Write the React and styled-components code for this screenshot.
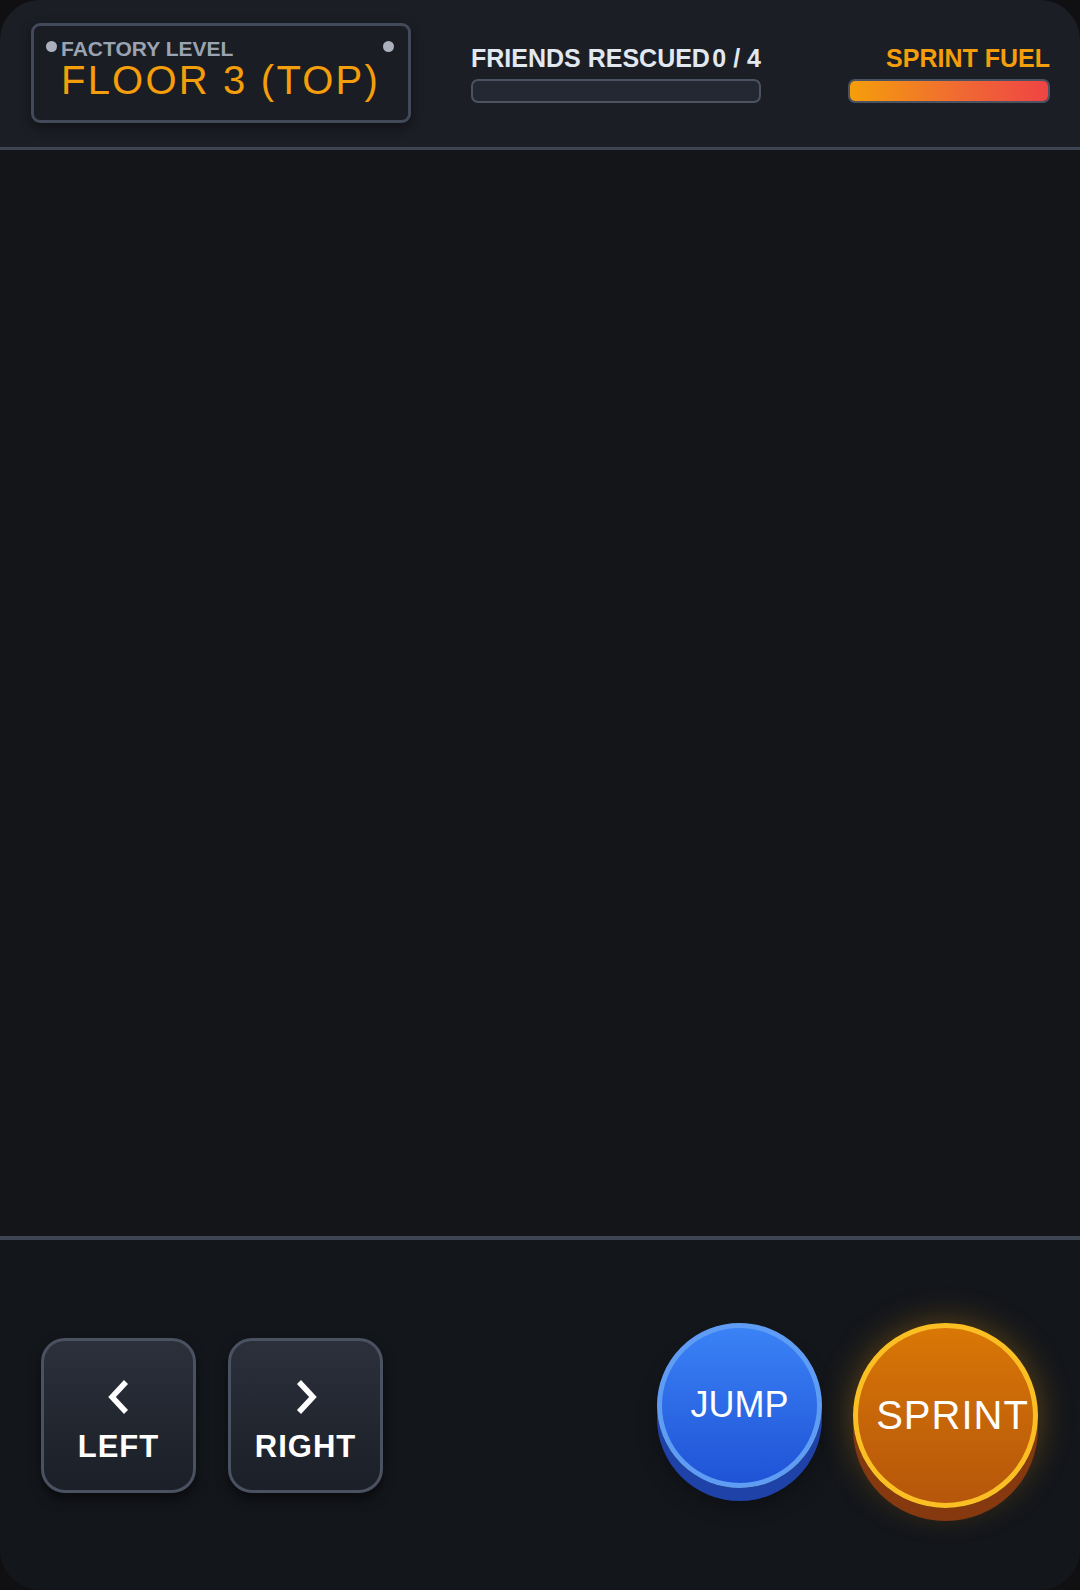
import React from 'react';
import styled, { createGlobalStyle } from 'styled-components';

const GlobalStyle = createGlobalStyle`
  * { box-sizing: border-box; }
  body {
    margin: 0;
    background: #100f11;
    font-family: "Liberation Sans", Arial, sans-serif;
  }
`;

const Shell = styled.div`
  height: 100vh;
  min-height: 1590px;
  display: flex;
  flex-direction: column;
  border-radius: 40px;
  overflow: hidden;
  background: #131519;
`;

const Header = styled.header`
  height: 150px;
  flex-shrink: 0;
  display: flex;
  align-items: center;
  padding: 0 30px 0 31px;
  background: #1b1e25;
  border-bottom: 3px solid #3d4452;
`;

const Plate = styled.div`
  position: relative;
  width: 380px;
  height: 100px;
  padding: 12px 27px 0;
  margin-top: -2px;
  display: flex;
  flex-direction: column;
  gap: 1px;
  background: #1a1d23;
  border: 3px solid #424958;
  border-radius: 9px;
  box-shadow: 0 4px 12px rgba(0, 0, 0, 0.45);
`;

const Screw = styled.span`
  position: absolute;
  top: 15px;
  ${p => (p.$right ? 'right: 14px;' : 'left: 12px;')}
  width: 11px;
  height: 11px;
  border-radius: 50%;
  background: #aab1bd;
`;

const PlateLabel = styled.div`
  font-size: 21px;
  line-height: 21px;
  font-weight: 700;
  color: #9aa3b2;
`;

const PlateValue = styled.div`
  font-size: 40px;
  line-height: 40px;
  letter-spacing: 2.2px;
  color: #f59e0b;
`;

const Meter = styled.div`
  display: flex;
  flex-direction: column;
  gap: 6px;
  width: ${p => p.$width}px;
  margin-left: ${p => p.$offset};
`;

const MeterLabel = styled.div`
  display: flex;
  justify-content: ${p => (p.$end ? 'flex-end' : 'space-between')};
  font-size: 25px;
  line-height: 29px;
  font-weight: 700;
  white-space: nowrap;
  color: ${p => p.$color};
`;

const Track = styled.div`
  height: 24px;
  border: 2px solid #4b5362;
  border-radius: 7px;
  background: #232833;
  overflow: hidden;
`;

const Fill = styled.div`
  height: 100%;
  background: linear-gradient(90deg, #f59e0b 0%, #f06a32 55%, #ef4444 100%);
`;

const GameArea = styled.main`
  flex: 1;
  background: #131519;
`;

const Controls = styled.footer`
  height: 354px;
  flex-shrink: 0;
  display: flex;
  align-items: center;
  justify-content: space-between;
  padding: 0 42px 0 41px;
  background: #13161b;
  border-top: 4px solid #3d4452;
`;

const Group = styled.div`
  display: flex;
  gap: ${p => p.$gap}px;
`;

const PadButton = styled.button`
  width: 155px;
  height: 155px;
  padding: 8px 0 0;
  display: flex;
  flex-direction: column;
  align-items: center;
  justify-content: center;
  gap: 20px;
  border: 3px solid #4a5160;
  border-radius: 24px;
  background: linear-gradient(180deg, #2b303b 0%, #1b1f27 100%);
  box-shadow: 0 6px 12px rgba(0, 0, 0, 0.55);
  color: #ffffff;
  font-family: "Liberation Sans", Arial, sans-serif;
  font-size: 31px;
  line-height: 24px;
  font-weight: 700;
  letter-spacing: 1px;
  cursor: pointer;
`;

const RoundButton = styled.button`
  width: ${p => p.$size}px;
  height: ${p => p.$size}px;
  padding: 0 0 0 ${p => p.$shift}px;
  display: flex;
  align-items: center;
  justify-content: center;
  border-radius: 50%;
  border: 5px solid ${p => p.$ring};
  background: linear-gradient(180deg, ${p => p.$top} 0%, ${p => p.$bottom} 100%);
  box-shadow: 0 13px 0 ${p => p.$base}, ${p => p.$glow};
  color: #ffffff;
  font-family: "Liberation Sans", Arial, sans-serif;
  font-size: ${p => p.$font}px;
  letter-spacing: ${p => p.$spacing}px;
  white-space: nowrap;
  cursor: pointer;
`;

const Chevron = ({ right }) => (
  <svg width="24" height="36" viewBox="0 0 24 36" fill="none">
    <path
      d={right ? 'M5 3 L19 18 L5 33' : 'M19 3 L5 18 L19 33'}
      stroke="#ffffff"
      strokeWidth="5.5"
      strokeLinejoin="miter"
    />
  </svg>
);

export default function App() {
  const rescued = 0;
  const total = 4;
  const fuel = 100;

  return (
    <>
      <GlobalStyle />
      <Shell>
        <Header>
          <Plate>
            <Screw />
            <Screw $right />
            <PlateLabel>FACTORY LEVEL</PlateLabel>
            <PlateValue>FLOOR 3 (TOP)</PlateValue>
          </Plate>

          <Meter $width={290} $offset="60px">
            <MeterLabel $color="#e2e8f0">
              <span>FRIENDS RESCUED</span>
              <span>{rescued} / {total}</span>
            </MeterLabel>
            <Track>
              <Fill style={{ width: `${(rescued / total) * 100}%` }} />
            </Track>
          </Meter>

          <Meter $width={202} $offset="auto">
            <MeterLabel $color="#f59e0b" $end>SPRINT FUEL</MeterLabel>
            <Track>
              <Fill style={{ width: `${fuel}%` }} />
            </Track>
          </Meter>
        </Header>

        <GameArea />

        <Controls>
          <Group $gap={32}>
            <PadButton>
              <Chevron />
              LEFT
            </PadButton>
            <PadButton>
              <Chevron right />
              RIGHT
            </PadButton>
          </Group>

          <Group $gap={31}>
            <RoundButton
              $size={165}
              $shift={0}
              $ring="#5f9df5"
              $top="#3b82f6"
              $bottom="#1f53d6"
              $base="#1e42a8"
              $glow="0 18px 20px rgba(0, 0, 0, 0.35)"
              $font={36}
              $spacing={0}
            >
              JUMP
            </RoundButton>
            <RoundButton
              $size={185}
              $shift={14}
              $ring="#fbbf24"
              $top="#d97706"
              $bottom="#b5560b"
              $base="#86390f"
              $glow="0 0 34px rgba(245, 158, 11, 0.35)"
              $font={40}
              $spacing={1}
            >
              SPRINT
            </RoundButton>
          </Group>
        </Controls>
      </Shell>
    </>
  );
}
